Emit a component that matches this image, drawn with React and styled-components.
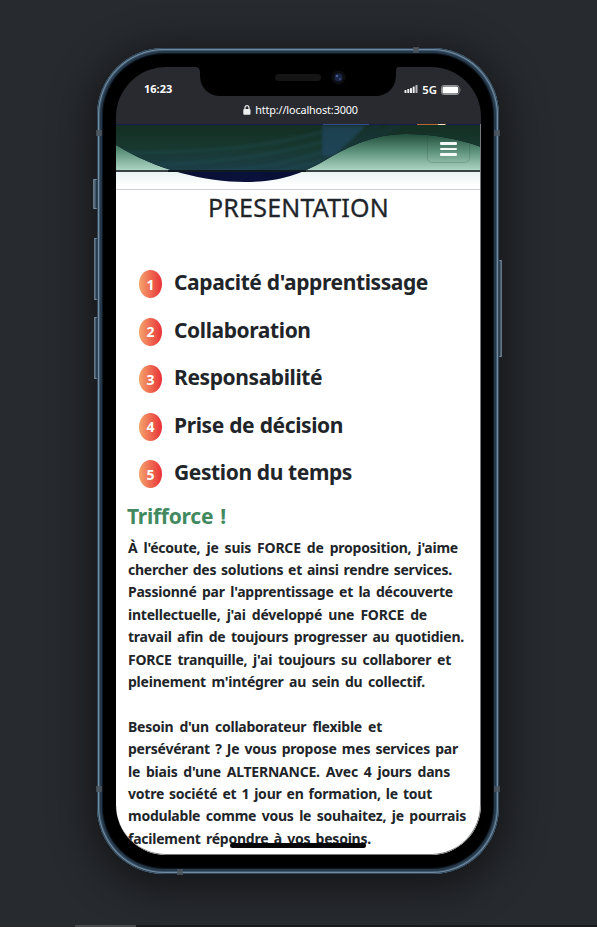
import React from "react";
import styled, { createGlobalStyle } from "styled-components";

const Global = createGlobalStyle`
  * { box-sizing: border-box; }
  body { margin: 0; background: #282a2f; font-family: "Noto Sans", "Open Sans", sans-serif; color: #212529; overflow: hidden; }
`;

const Page = styled.div`
  position: relative;
  width: 597px;
  height: 927px;
  padding: 48px 0 0 97px;
  background: #272a2f;
  overflow: hidden;
`;

const Phone = styled.div`
  position: relative;
  width: 402px;
  height: 826px;
  padding: 19px 18px 19px 19px;
  border-radius: 67px;
  background: #000;
  box-shadow: inset 0 0 0 1px #30475b, inset 0 0 0 2px #728b9f, inset 0 0 0 3px #425a6f,
    inset 0 0 0 5px #24384a, inset 0 0 1px 6px #101a24, 0 8px 42px 8px rgba(0, 0, 0, 0.48);
`;

const SideButton = styled.div`
  position: absolute;
  left: ${(p) => p.$x}px;
  top: ${(p) => p.$y}px;
  width: ${(p) => p.$w || 3}px;
  height: ${(p) => p.$h}px;
  border-radius: 1px;
  background: linear-gradient(${(p) => (p.$right ? "270deg" : "90deg")}, #6c8191, #445869 65%, #15212c);
  border-top: 1px solid #7590a6;
  border-bottom: 1px solid #7590a6;
`;

const Antenna = styled.div`
  position: absolute;
  left: ${(p) => p.$x}px;
  top: ${(p) => p.$y}px;
  width: 6px;
  height: 6px;
  background: rgba(75, 85, 93, 0.85);
`;

const Screen = styled.div`
  position: relative;
  display: flex;
  flex-direction: column;
  width: 365px;
  height: 788px;
  border-radius: 50px;
  overflow: hidden;
  background: linear-gradient(#282a2f 0 57px, #fff 57px);
`;

const Chrome = styled.div`
  flex: none;
  height: 57px;
  color: #fff;
`;

const Status = styled.div`
  display: flex;
  justify-content: space-between;
  align-items: flex-start;
  height: 34px;
  padding: 14px 20px 0 28px;
`;

const Clock = styled.span`
  font: 700 11px/15px "Noto Sans", sans-serif;
`;

const Signals = styled.div`
  display: flex;
  align-items: center;
  height: 17px;
  gap: 4px;
  font: 600 11.3px/15px "Noto Sans", sans-serif;
`;

const Address = styled.div`
  display: flex;
  align-items: center;
  justify-content: center;
  gap: 4px;
  height: 17px;
  padding-left: 4px;
  font-size: 10.8px;
  line-height: 16px;
  letter-spacing: -0.12px;
`;

const Notch = styled.svg`
  position: absolute;
  left: 80px;
  top: 0;
`;

const Hero = styled.div`
  position: relative;
  flex: none;
  height: 66px;
  svg { display: block; }
`;

const MenuButton = styled.button`
  position: absolute;
  left: 311px;
  top: 9px;
  display: flex;
  flex-direction: column;
  justify-content: center;
  align-items: center;
  gap: 3px;
  width: 43px;
  height: 30px;
  padding: 2px 0 0;
  border: 1px solid rgba(20, 60, 45, 0.18);
  border-radius: 5px;
  background: transparent;
`;

const MenuBar = styled.span`
  width: 17px;
  height: 2.700px;
  border-radius: 1px;
  background: #f4f8f6;
`;

const Title = styled.h1`
  flex: none;
  margin: 0 0 42px;
  height: 34px;
  text-align: center;
  font: 400 25px/34px "Noto Sans", sans-serif;
  letter-spacing: 0.2px;
  -webkit-text-stroke: 0.3px #212529;
`;

const Skills = styled.ol`
  flex: none;
  margin: 0;
  padding: 0 0 0 23px;
  list-style: none;
`;

const Skill = styled.li`
  display: flex;
  gap: 12px;
  height: 47.5px;
`;

const Badge = styled.span`
  display: flex;
  align-items: center;
  justify-content: center;
  width: 23px;
  height: 28px;
  margin-top: 4px;
  border-radius: 50%;
  background: linear-gradient(90deg, #f4a46c, #e93137);
  color: #fff;
  font-size: 14px;
  font-weight: 700;
`;

const Line = styled.span`
  display: block;
  width: ${(p) => p.$w}px;
  white-space: nowrap;
  text-align: justify;
  text-align-last: justify;
`;

const SkillName = styled.span`
  font-size: 21px;
  font-weight: 700;
  line-height: 33px;
  letter-spacing: -0.4px;
`;

const Subtitle = styled.h2`
  flex: none;
  margin: -4px 0 0 11px;
  height: 33px;
  color: #428960;
  font-size: 21px;
  font-weight: 700;
  line-height: 33px;
  letter-spacing: -0.25px;
`;

const Copy = styled.p`
  flex: none;
  margin: 4px 0 22.4px 12px;
  font-size: 14px;
  font-weight: 700;
  line-height: 22.4px;
  letter-spacing: -0.23px;
  & + & { margin-top: 0; }
`;

const HomeBar = styled.div`
  position: absolute;
  left: 114px;
  top: 776px;
  width: 136px;
  height: 5px;
  border-radius: 3px;
  background: #050505;
`;

const ScreenEdge = styled.div`
  position: absolute;
  inset: 57px 0 0;
  border-radius: 0 0 50px 50px;
  border-bottom: 1px solid #777;
  border-right: 1px solid #777b7e;
  pointer-events: none;
`;

const Track = styled.div`
  position: absolute;
  left: 0;
  bottom: 0;
  width: 597px;
  height: 2px;
  background: linear-gradient(90deg, #26282c 0 75px, #47494c 75px 136px, #17191c 136px);
`;

const skills = [
  ["Capacité d'apprentissage", 254],
  ["Collaboration", 138],
  ["Responsabilité", 147],
  ["Prise de décision", 169],
  ["Gestion du temps", 178],
];

const paragraphs = [
  [
    ["À l'écoute, je suis FORCE de proposition, j'aime", 330],
    ["chercher des solutions et ainsi rendre services.", 324],
    ["Passionné par l'apprentissage et la découverte", 325],
    ["intellectuelle, j'ai développé une FORCE de", 299],
    ["travail afin de toujours progresser au quotidien.", 336],
    ["FORCE tranquille, j'ai toujours su collaborer et", 323],
    ["pleinement m'intégrer au sein du collectif.", 297],
  ],
  [
    ["Besoin d'un collaborateur flexible et", 254],
    ["persévérant ? Je vous propose mes services par", 330],
    ["le biais d'une ALTERNANCE. Avec 4 jours dans", 322],
    ["votre société et 1 jour en formation, le tout", 304],
    ["modulable comme vous le souhaitez, je pourrais", 338],
    ["facilement répondre à vos besoins.", 243],
  ],
];

function HeroArt() {
  return (
    <svg width="365" height="66" viewBox="0 0 365 66">
      <defs>
        <linearGradient id="night" x1="0" y1="0" x2="1" y2="0">
          <stop offset="0" stopColor="#070d2c" />
          <stop offset=".35" stopColor="#0a123c" />
          <stop offset=".6" stopColor="#070b2e" />
          <stop offset=".8" stopColor="#08122d" />
        </linearGradient>
        <linearGradient id="veilDark" x1="0" y1="0" x2="0" y2="1">
          <stop offset="0" stopColor="#142e22" />
          <stop offset=".5" stopColor="#18382f" />
          <stop offset="1" stopColor="#1c3e47" />
        </linearGradient>
        <linearGradient id="veilLight" x1="0" y1="0" x2="0" y2="1">
          <stop offset="0" stopColor="#17392b" />
          <stop offset=".25" stopColor="#265441" />
          <stop offset=".6" stopColor="#5e927c" />
          <stop offset="1" stopColor="#acd4c2" />
        </linearGradient>
        <linearGradient id="mist" x1="0" y1="0" x2="0" y2="1">
          <stop offset="0" stopColor="#e8f3f2" />
          <stop offset=".8" stopColor="#fff" />
        </linearGradient>
        <clipPath id="wave">
          <path d="M0 0H365V23C340 14 315 10 290 10C258 10 234 22 213 34C188 49 166 58 129 58C90 58 40 46 0 21Z" />
        </clipPath>
        <clipPath id="nav"><rect width="365" height="46" /></clipPath>
        <filter id="soft"><feGaussianBlur stdDeviation="1.5" /></filter>
      </defs>
      <rect width="365" height="46" fill="url(#veilLight)" />
      <rect y="47" width="365" height="19" fill="url(#mist)" />
      <g clipPath="url(#wave)">
        <rect width="365" height="66" fill="url(#night)" />
        <g clipPath="url(#nav)">
          <rect width="365" height="46" fill="url(#veilDark)" />
          <g stroke="#24545d" strokeWidth="3" fill="none" opacity=".35" filter="url(#soft)">
            <path d="M0 29C80 28 140 26 206 8M45 40C110 39 160 30 206 18M90 48C145 45 175 38 206 28M125 52C160 49 184 42 206 36" />
          </g>
          <path d="M206 2H250L232 20L218 32L206 32Z" fill="#284f75" opacity=".55" filter="url(#soft)" />
          <path d="M228 27L262 1M240 20L284 1" stroke="#17363b" strokeWidth="7" opacity=".5" filter="url(#soft)" />
        </g>
      </g>
      <path d="M0 0H365" stroke="#17204d" strokeWidth="2" />
      <path d="M207 0H253" stroke="#304b91" strokeWidth="2" />
      <path d="M301 0H330" stroke="#b36838" strokeWidth="2" />
      <path d="M322 0H329" stroke="#f7dfc2" strokeWidth="2" />
      <path d="M0 47H365" stroke="#3b4347" strokeWidth="2" />
      <path d="M52 47H190" stroke="#0e1a20" strokeWidth="2" />
      <path d="M0 65.5H365" stroke="#cfcfd5" />
    </svg>
  );
}

export default function App() {
  return (
    <Page>
      <Global />
      <Phone>
        <SideButton $x={-4} $y={131} $h={30} $w={4} />
        <SideButton $x={-3} $y={190} $h={62} />
        <SideButton $x={-3} $y={269} $h={62} />
        <SideButton $x={402} $y={212} $h={97} $right />
        <Antenna $x={-1} $y={82} />
        <Antenna $x={397} $y={82} />
        <Antenna $x={316} $y={-1} />
        <Antenna $x={-1} $y={738} />
        <Antenna $x={397} $y={738} />
        <Antenna $x={80} $y={821} />
        <Screen>
          <Chrome>
            <Status>
              <Clock>16:23</Clock>
              <Signals>
                <svg width="14" height="9" viewBox="0 0 13 9" fill="#eee">
                  <rect y="5" width="2" height="3" rx=".6" />
                  <rect x="2.8" y="4" width="2" height="4" rx=".6" />
                  <rect x="5.5" y="3" width="2" height="5" rx=".6" />
                  <rect x="8.2" y="1.5" width="2" height="6.5" rx=".6" />
                  <rect x="11" width="2" height="8" rx=".6" fill="#b8b9bb" />
                </svg>
                <span>5G</span>
                <svg width="20" height="10" viewBox="0 0 20 10">
                  <rect x=".5" y=".5" width="17.5" height="9" rx="2.2" fill="none" stroke="#929497" />
                  <rect x="1.5" y="1.5" width="15.5" height="7" rx="1.3" fill="#fff" />
                  <path d="M19 3.5Q20 5 19 6.5Z" fill="#a0a1a3" />
                </svg>
              </Signals>
            </Status>
            <Address>
              <svg width="8" height="10" viewBox="0 0 8 10">
                <path d="M2 5V2.7a2 2 0 0 1 4 0V5" fill="none" stroke="#eee" strokeWidth="1.2" />
                <rect x=".3" y="4" width="7.2" height="5.7" rx="1" fill="#eee" />
              </svg>
              <span>http://localhost:3000</span>
            </Address>
          </Chrome>
          <Hero>
            <HeroArt />
            <MenuButton aria-label="Menu">
              <MenuBar />
              <MenuBar />
              <MenuBar />
            </MenuButton>
          </Hero>
          <Title>PRESENTATION</Title>
          <Skills>
            {skills.map(([name, w], i) => (
              <Skill key={name}>
                <Badge>{i + 1}</Badge>
                <SkillName><Line $w={w}>{name}</Line></SkillName>
              </Skill>
            ))}
          </Skills>
          <Subtitle><Line $w={99}>Trifforce !</Line></Subtitle>
          {paragraphs.map((lines, i) => (
            <Copy key={i}>
              {lines.map(([text, w]) => <Line key={text} $w={w}>{text}</Line>)}
            </Copy>
          ))}
          <Notch width="202" height="30" viewBox="0 0 202 30">
            <path d="M0 0Q4 0 4 6V8C4 21 13 29 25 29H179C191 29 200 21 200 8V6Q200 0 202 0Z" fill="#000" />
            <rect x="79" y="7" width="46" height="7" rx="3.5" fill="#151515" />
            <circle cx="142.500" cy="10.500" r="7" fill="#0c0d11" />
            <circle cx="142.500" cy="10.500" r="4" fill="#1b2444" />
            <circle cx="141" cy="9" r="1.300" fill="#455b91" />
            <circle cx="144" cy="12" r="1.200" fill="#344777" />
          </Notch>
          <HomeBar />
          <ScreenEdge />
        </Screen>
      </Phone>
      <Track />
    </Page>
  );
}
